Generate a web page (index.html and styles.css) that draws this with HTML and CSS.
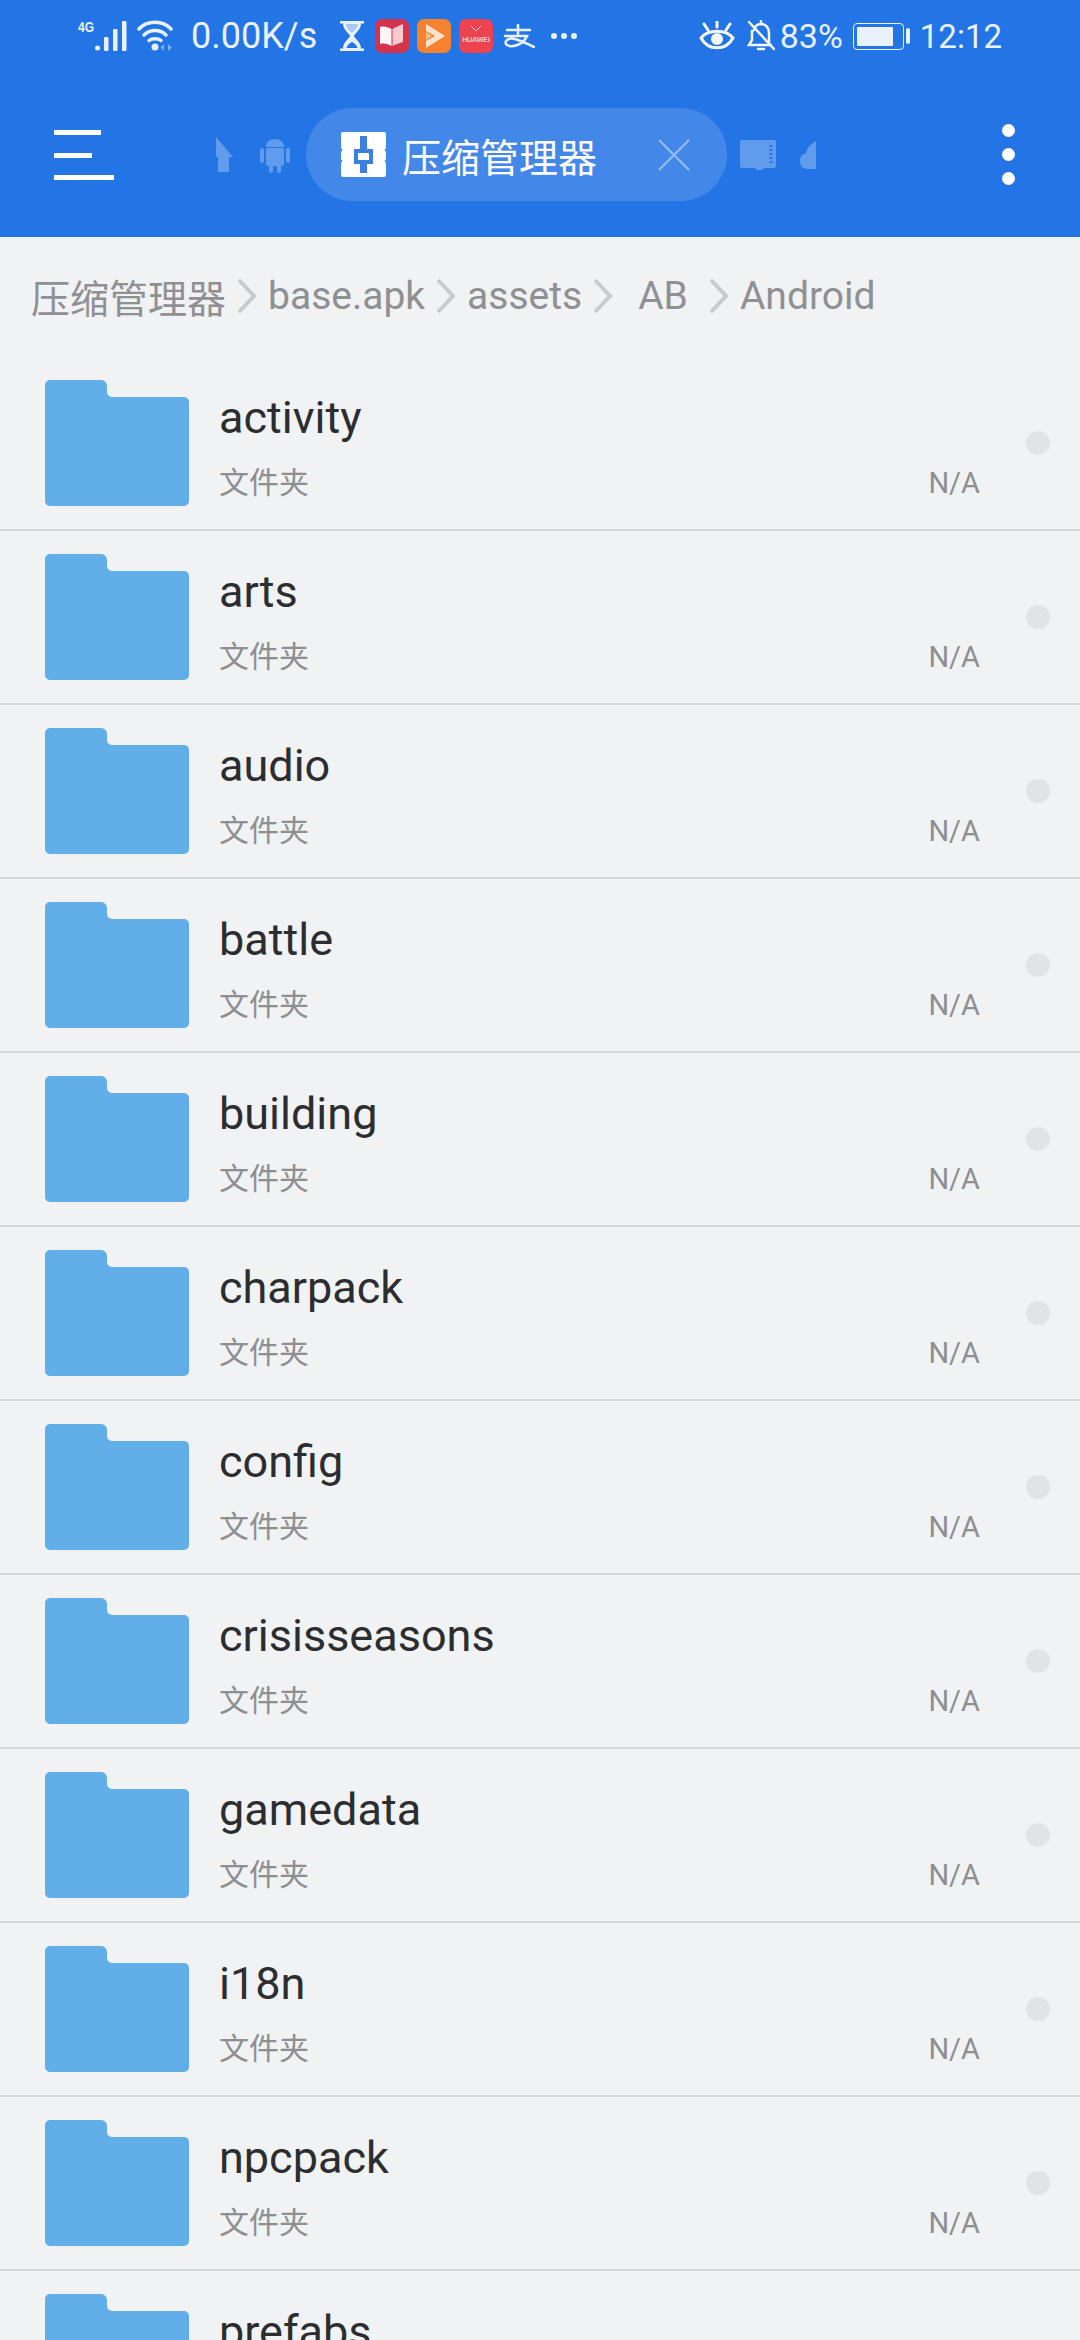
FILE: index.html
```html
<!DOCTYPE html>
<html lang="zh-CN">
<head>
    <meta charset="UTF-8">
    <meta name="viewport" content="width=device-width, initial-scale=1.0">
    <title>压缩管理器</title>
    <link rel="stylesheet" href="styles.css">
</head>
<body>
    <!-- Blue header: system status bar and tab strip -->
    <header class="header">
        <div class="status-bar">
            <div class="status-group">
                <svg class="icon-signal" width="49" height="32" viewBox="0 0 49 32">
                    <text x="0" y="12" class="net-label" textLength="16" lengthAdjust="spacingAndGlyphs">4G</text>
                    <circle cx="19.500" cy="28" r="2.500" fill="#e9f1fd"/>
                    <rect x="26" y="17" width="4.500" height="14" rx="1" fill="#e9f1fd"/>
                    <rect x="35" y="9" width="4.500" height="22" rx="1" fill="#e9f1fd"/>
                    <rect x="44" y="1" width="4.500" height="30" rx="1" fill="#e9f1fd"/>
                </svg>
                <svg class="icon-wifi" width="36" height="32" viewBox="0 0 36 32" fill="none" stroke="#e9f1fd" stroke-width="3.500" stroke-linecap="round">
                    <path d="M2 9C10 0 26 0 34 9"/>
                    <path d="M7 15C13 9 23 9 29 15"/>
                    <path d="M12 20.500C15 18 21 18 24 20.500"/>
                    <circle cx="18" cy="27" r="3.500" fill="#e9f1fd" stroke="none"/>
                    <path d="M27 24L23.500 27.500L27 31ZM31 24L35 27.500L31 31Z" fill="#7fabee" stroke="none"/>
                </svg>
                <span class="speed">0.00K/s</span>
                <svg class="icon-hourglass" width="24" height="30" viewBox="0 0 24 30">
                    <path d="M0 0H24V2.500H21C21 9 15 12 14 15C15 18 21 21 21 27.500H24V30H0V27.500H3C3 21 9 18 10 15C9 12 3 9 3 2.500H0Z" fill="#e9f1fd"/>
                    <path d="M6 3H18C18 7 14 10 12 12C10 10 6 7 6 3Z" fill="#a9c9f5"/>
                    <path d="M6.500 27C7 24 10 22 12 21C14 22 17 24 17.500 27Z" fill="#2374e5"/>
                </svg>
                <svg class="app-icon app-book" width="34" height="34" viewBox="0 0 34 34">
                    <rect width="34" height="34" rx="7" fill="#d5334c"/>
                    <path d="M5 8C9 7 13 8 16.500 10V27C13 25 9 24 5 25Z" fill="#fdf4f5"/>
                    <path d="M17.500 10C21 8 25 6 28 5V23C25 24 21 25 17.500 27Z" fill="#f7c9d0"/>
                </svg>
                <svg class="app-icon" width="34" height="34" viewBox="0 0 34 34">
                    <rect width="34" height="34" rx="7" fill="#f5822e"/>
                    <path d="M9 5L28 17L9 29V22L18 17L9 12Z" fill="#fde3cc"/>
                    <path d="M9 13L15 17L9 21Z" fill="#fbc08e"/>
                </svg>
                <svg class="app-icon" width="34" height="34" viewBox="0 0 34 34">
                    <rect width="34" height="34" rx="7" fill="#ee424f"/>
                    <path d="M12 7L17 12L22 7" fill="none" stroke="#fbd3d6" stroke-width="1"/>
                    <text x="17" y="23" class="huawei-label">HUAWEI</text>
                </svg>
                <svg class="icon-alipay" width="32" height="24" viewBox="0 0 32 24" fill="none" stroke="#e9f1fd" stroke-width="2.600" stroke-linecap="round">
                    <path d="M4 6H27M15 1V10M2 12H24C20 21 9 24 4 21C0 18 5 13 12 15C19 17 25 20 31 23"/>
                </svg>
                <div class="more-dots"><i></i><i></i><i></i></div>
            </div>
            <div class="status-group">
                <svg class="icon-eye" width="36" height="30" viewBox="0 0 36 30" fill="none" stroke="#f4f8fe" stroke-width="3" stroke-linecap="round">
                    <path d="M2 17C9 8 27 8 34 17C27 30 9 30 2 17Z"/>
                    <circle cx="18" cy="18" r="6" fill="#f4f8fe" stroke="none"/>
                    <path d="M18 1V6M5 3L9 9M31 3L27 9"/>
                </svg>
                <svg class="icon-bell" width="28" height="32" viewBox="0 0 28 32" fill="none" stroke="#f4f8fe" stroke-width="2.500" stroke-linecap="round">
                    <path d="M7 10C8 6 11 4 14 4C19 4 22 8 22 13V22M5 11V20L2 25H24"/>
                    <path d="M11 29H17M2 2L27 29M14 1V4"/>
                </svg>
                <span class="battery-text">83%</span>
                <div class="battery"><div class="battery-level"></div></div>
                <div class="battery-tip"></div>
                <span class="clock">12:12</span>
            </div>
        </div>

        <div class="tab-bar">
            <svg class="icon-menu" width="60" height="50" viewBox="0 0 60 50">
                <rect x="0" y="0" width="47" height="5" fill="#fff"/>
                <rect x="0" y="23" width="38" height="5" fill="#fff"/>
                <rect x="0" y="45" width="60" height="5" fill="#fff"/>
            </svg>
            <svg class="tab-faded icon-arrow" width="17" height="35" viewBox="0 0 17 35">
                <path d="M0 0L17 20H13V35H2V20H0Z" fill="#fff"/>
            </svg>
            <svg class="tab-faded icon-android" width="30" height="36" viewBox="0 0 30 36">
                <path d="M6 10C6 5 10 2 15 2C20 2 24 5 24 10Z" fill="#fff"/>
                <rect x="6" y="11" width="18" height="18" rx="2" fill="#fff"/>
                <rect x="0" y="11" width="4" height="15" rx="2" fill="#fff"/>
                <rect x="26" y="11" width="4" height="15" rx="2" fill="#fff"/>
                <rect x="9" y="27" width="4" height="9" rx="2" fill="#fff"/>
                <rect x="17" y="27" width="4" height="9" rx="2" fill="#fff"/>
            </svg>
            <div class="tab-active">
                <svg class="tab-app-icon" width="45" height="45" viewBox="0 0 45 45">
                    <path d="M2 0H43A2 2 0 0 1 45 2V16L43.500 18L45 20V27L43.500 29L45 31V43A2 2 0 0 1 43 45H2A2 2 0 0 1 0 43V31L1.500 29L0 27V20L1.500 18L0 16V2A2 2 0 0 1 2 0Z" fill="#fff"/>
                    <rect x="19" y="4" width="7" height="37" fill="#3d7fe0"/>
                    <rect x="13" y="17" width="19" height="15" fill="#3d7fe0"/>
                    <rect x="17" y="21" width="11" height="7" fill="#fff"/>
                </svg>
                <span class="tab-title">压缩管理器</span>
                <svg class="tab-close" width="32" height="32" viewBox="0 0 32 32" fill="none" stroke="#fff" stroke-opacity="0.45" stroke-width="2">
                    <path d="M1 1L31 31M31 1L1 31"/>
                </svg>
            </div>
            <svg class="tab-faded icon-sd" width="36" height="30" viewBox="0 0 36 30">
                <path d="M2 0H34A2 2 0 0 1 36 2V26A2 2 0 0 1 34 28H24L22 30H17L15 28H2A2 2 0 0 1 0 26V2A2 2 0 0 1 2 0Z" fill="#fff"/>
                <path d="M31 5V24" stroke="#2374e5" stroke-width="2.500" stroke-dasharray="2 2"/>
            </svg>
            <svg class="tab-faded icon-cloud" width="16" height="28" viewBox="0 0 16 28">
                <path d="M16 0V28H8C2 28 0 24 0 20C0 15 3 13 6 12C7 7 11 3 16 0Z" fill="#fff"/>
            </svg>
            <div class="overflow-menu"><i></i><i></i><i></i></div>
        </div>
    </header>

    <nav class="breadcrumb">
        <span>压缩管理器</span>
        <svg class="crumb-arrow" width="20" height="36" viewBox="0 0 20 36"><path d="M2 2L17 18L2 34"/></svg>
        <span>base.apk</span>
        <svg class="crumb-arrow" width="20" height="36" viewBox="0 0 20 36"><path d="M2 2L17 18L2 34"/></svg>
        <span>assets</span>
        <svg class="crumb-arrow" width="20" height="36" viewBox="0 0 20 36"><path d="M2 2L17 18L2 34"/></svg>
        <span class="crumb-ab">AB</span>
        <svg class="crumb-arrow" width="20" height="36" viewBox="0 0 20 36"><path d="M2 2L17 18L2 34"/></svg>
        <span>Android</span>
    </nav>

    <div class="file-list" id="fileList"></div>

    <script src="list.js"></script>
</body>
</html>
```

FILE: styles.css
```css
* {
    box-sizing: border-box;
}
html, body {
    margin: 0;
    height: 2340px;
    overflow: hidden;
}
body {
    font-family: Roboto, "Noto Sans CJK SC", sans-serif;
    background-color: #f1f2f4;
}
svg {
    display: block;
    flex-shrink: 0;
}
.header {
    height: 237px;
    background-color: #2374e5;
}
.status-bar {
    display: flex;
    justify-content: space-between;
    align-items: center;
    height: 72px;
    padding: 0 78px;
    color: #e9f1fd;
    font-size: 34px;
}
.status-group {
    display: flex;
    align-items: center;
}
.icon-signal {
    overflow: visible;
}
.net-label {
    font-family: "Liberation Sans", sans-serif;
    font-size: 15px;
    font-weight: bold;
    fill: #e9f1fd;
}
.huawei-label {
    font-family: "Liberation Sans", sans-serif;
    font-size: 7px;
    text-anchor: middle;
    fill: #fff;
}
.icon-wifi {
    margin-left: 10px;
}
.speed {
    margin-left: 18px;
    font-size: 36px;
}
.icon-hourglass {
    margin-left: 23px;
}
.app-book {
    margin-left: 11px;
}
.app-icon + .app-icon {
    margin-left: 8px;
}
.icon-alipay {
    margin-left: 10px;
}
.more-dots {
    display: flex;
    gap: 4px;
    margin-left: 16px;
}
.more-dots i {
    width: 6px;
    height: 6px;
    border-radius: 50%;
    background-color: #e9f1fd;
}
.icon-bell {
    margin-left: 12px;
}
.battery-text {
    margin-left: 5px;
}
.battery {
    width: 51px;
    height: 27px;
    margin-left: 10px;
    padding: 3px;
    border: 1.5px solid #e9f1fd;
    border-radius: 4px;
}
.battery-level {
    width: 83%;
    height: 100%;
    border-radius: 1px;
    background-color: #e9f1fd;
}
.battery-tip {
    width: 4px;
    height: 16px;
    margin-left: 2px;
    border-radius: 2px;
    background-color: #e9f1fd;
}
.clock {
    margin-left: 10px;
    font-size: 33px;
}
.tab-bar {
    display: flex;
    align-items: center;
    height: 165px;
    padding-left: 54px;
}
.tab-faded {
    opacity: 0.28;
}
.icon-arrow {
    margin-left: 102px;
}
.icon-android {
    margin-left: 27px;
}
.tab-active {
    display: flex;
    align-items: center;
    width: 421px;
    height: 93px;
    margin-left: 16px;
    padding-left: 35px;
    border-radius: 47px;
    background-color: rgba(255, 255, 255, 0.15);
    color: #fff;
}
.tab-title {
    margin-left: 16px;
    font-size: 39px;
}
.tab-close {
    margin-left: 61px;
}
.icon-sd {
    margin-left: 13px;
}
.icon-cloud {
    margin-left: 24px;
}
.overflow-menu {
    display: flex;
    flex-direction: column;
    gap: 11px;
    margin-left: auto;
    margin-right: 65px;
}
.overflow-menu i {
    width: 13px;
    height: 13px;
    border-radius: 50%;
    background-color: #fff;
}
.breadcrumb {
    display: flex;
    align-items: center;
    height: 120px;
    padding: 0 0 2px 31px;
    color: #8f9093;
    font-size: 39px;
}
.crumb-arrow {
    margin: 0 11px;
    fill: none;
    stroke: #c9cacc;
    stroke-width: 4;
}
.crumb-ab {
    margin: 0 10px 0 14px;
}
.file-row {
    display: flex;
    align-items: center;
    height: 174px;
    padding-left: 45px;
    border-bottom: 2px solid #d5d6d9;
}
.file-folder {
    margin-right: 30px;
}
.file-info {
    flex: 1;
    padding-top: 4px;
}
.file-name {
    color: #2c2d30;
    font-size: 45px;
    line-height: 60px;
}
.file-meta {
    display: flex;
    justify-content: space-between;
    margin-top: 15px;
    color: #8e8f92;
    font-size: 30px;
    line-height: 40px;
}
.file-size {
    font-size: 29px;
}
.file-dot {
    width: 24px;
    height: 24px;
    margin: 0 30px 0 46px;
    border-radius: 50%;
    background-color: #e2e3e5;
}
```

FILE: list.js
```js
const folders = ['activity', 'arts', 'audio', 'battle', 'building', 'charpack',
    'config', 'crisisseasons', 'gamedata', 'i18n', 'npcpack', 'prefabs'];

const fileList = document.getElementById('fileList');

// Every row is the same, only the folder name changes
folders.forEach(function(name) {
    const row = document.createElement('div');
    row.classList.add('file-row');
    row.innerHTML = `
        <svg class="file-folder" width="144" height="126" viewBox="0 0 144 126">
            <path d="M5 0H56A6 6 0 0 1 62 6V12A5 5 0 0 0 67 17H139A5 5 0 0 1 144 22V121A5 5 0 0 1 139 126H5A5 5 0 0 1 0 121V5A5 5 0 0 1 5 0Z" fill="#62aee8"/>
        </svg>
        <div class="file-info">
            <div class="file-name">${name}</div>
            <div class="file-meta"><span>文件夹</span><span class="file-size">N/A</span></div>
        </div>
        <div class="file-dot"></div>
    `;
    fileList.appendChild(row);
});
```
